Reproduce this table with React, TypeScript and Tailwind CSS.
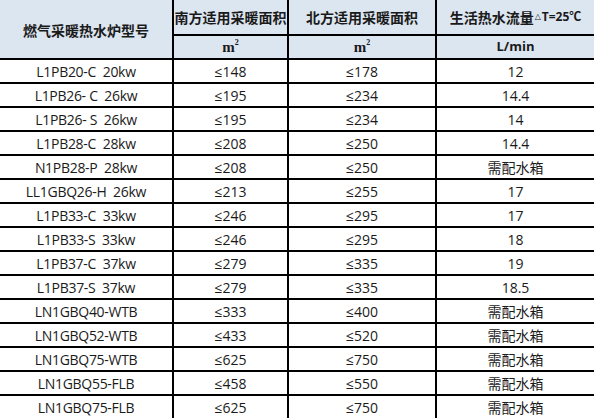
import React from 'react';

type Row = { model: string; south: string; north: string; flow: string };

const rows: Row[] = [
  { model: 'L1PB20-C  20kw', south: '≤148', north: '≤178', flow: '12' },
  { model: 'L1PB26- C  26kw', south: '≤195', north: '≤234', flow: '14.4' },
  { model: 'L1PB26- S  26kw', south: '≤195', north: '≤234', flow: '14' },
  { model: 'L1PB28-C  28kw', south: '≤208', north: '≤250', flow: '14.4' },
  { model: 'N1PB28-P  28kw', south: '≤208', north: '≤250', flow: '需配水箱' },
  { model: 'LL1GBQ26-H  26kw', south: '≤213', north: '≤255', flow: '17' },
  { model: 'L1PB33-C  33kw', south: '≤246', north: '≤295', flow: '17' },
  { model: 'L1PB33-S  33kw', south: '≤246', north: '≤295', flow: '18' },
  { model: 'L1PB37-C  37kw', south: '≤279', north: '≤335', flow: '19' },
  { model: 'L1PB37-S  37kw', south: '≤279', north: '≤335', flow: '18.5' },
  { model: 'LN1GBQ40-WTB', south: '≤333', north: '≤400', flow: '需配水箱' },
  { model: 'LN1GBQ52-WTB', south: '≤433', north: '≤520', flow: '需配水箱' },
  { model: 'LN1GBQ75-WTB', south: '≤625', north: '≤750', flow: '需配水箱' },
  { model: 'LN1GBQ55-FLB', south: '≤458', north: '≤550', flow: '需配水箱' },
  { model: 'LN1GBQ75-FLB', south: '≤625', north: '≤750', flow: '需配水箱' },
];

const font = { fontFamily: '"Open Sans", "Noto Sans CJK SC", sans-serif' };

const SqM = () => (
  <span className="font-bold text-[15px] leading-none" style={{ fontFamily: '"Liberation Serif", "Noto Sans CJK SC", serif' }}>
    m<span className="text-[8px] align-top relative -top-[1px]">2</span>
  </span>
);

export default function App() {
  return (
    <div className="w-[594px] h-[418px] overflow-hidden bg-white text-[#1a1a1a]" style={font}>
      <div className="grid grid-cols-[174px_115px_148px_157px]">
        {/* header */}
        <div className="row-span-2 h-[60px] bg-[#dce6f1] border-r-2 border-b-2 border-black flex items-center justify-center pt-[2px] text-[14px] font-bold">
          燃气采暖热水炉型号
        </div>
        <div className="h-[36px] bg-[#dce6f1] border-r-2 border-b-2 border-black flex items-center justify-center text-[14px] font-bold">
          南方适用采暖面积
        </div>
        <div className="h-[36px] bg-[#dce6f1] border-r-2 border-b-2 border-black flex items-center justify-center text-[14px] font-bold">
          北方适用采暖面积
        </div>
        <div className="h-[36px] bg-[#dce6f1] border-b-2 border-black flex items-center justify-center text-[14px] font-bold">
          生活热水流量
          <span className="text-[8px] leading-none font-normal mx-[1px]" style={{ fontFamily: '"DejaVu Sans", sans-serif' }}>
            △
          </span>
          <span className="text-[12px]">T=25℃</span>
        </div>
        <div className="h-[24px] bg-[#dce6f1] border-r-2 border-b-2 border-black flex items-center justify-center">
          <SqM />
        </div>
        <div className="h-[24px] bg-[#dce6f1] border-r-2 border-b-2 border-black flex items-center justify-center">
          <SqM />
        </div>
        <div className="h-[24px] bg-[#dce6f1] border-b-2 border-black flex items-center justify-center text-[13px] font-bold">
          L/min
        </div>

        {/* body */}
        {rows.map((r) => (
          <React.Fragment key={r.model + r.south}>
            <div className="h-[24px] border-r-2 border-b-2 border-black flex items-center justify-center text-[14px] tracking-[-0.3px] whitespace-pre">
              {r.model}
            </div>
            <div className="h-[24px] border-r-2 border-b-2 border-black flex items-center justify-center text-[14px]">
              {r.south}
            </div>
            <div className="h-[24px] border-r-2 border-b-2 border-black flex items-center justify-center text-[14px]">
              {r.north}
            </div>
            <div className="h-[24px] border-b-2 border-black flex items-center justify-center text-[14px]">
              {r.flow}
            </div>
          </React.Fragment>
        ))}
      </div>
    </div>
  );
}
